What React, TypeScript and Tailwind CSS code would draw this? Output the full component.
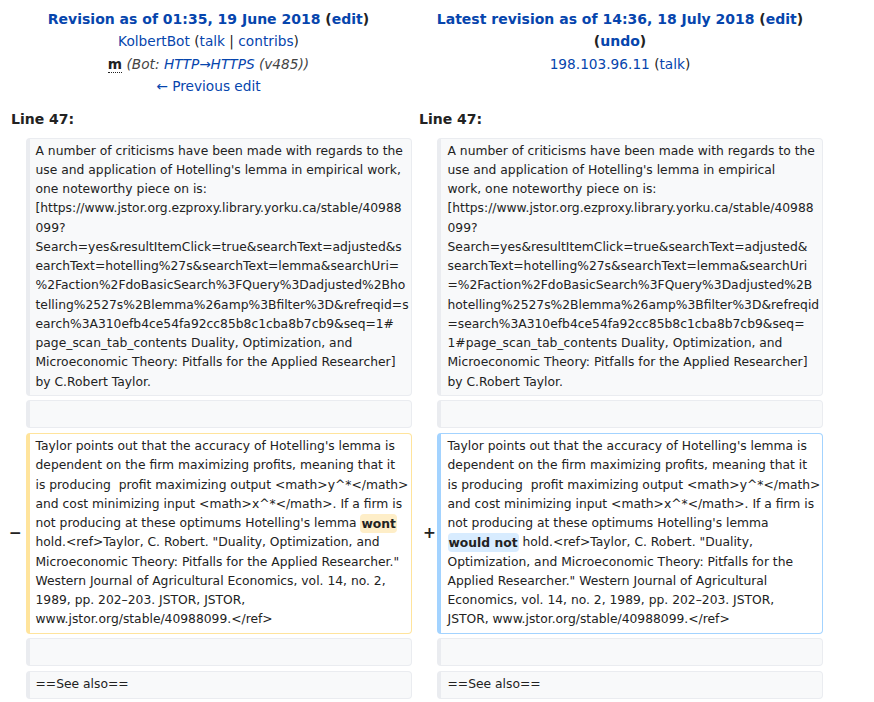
const leftTop = [
  "A number of criticisms have been made with regards to the",
  "use and application of Hotelling's lemma in empirical work,",
  "one noteworthy piece on is:",
  "[https://www.jstor.org.ezproxy.library.yorku.ca/stable/40988",
  "099?",
  "Search=yes&resultItemClick=true&searchText=adjusted&s",
  "earchText=hotelling%27s&searchText=lemma&searchUri=",
  "%2Faction%2FdoBasicSearch%3FQuery%3Dadjusted%2Bho",
  "telling%2527s%2Blemma%26amp%3Bfilter%3D&refreqid=s",
  "earch%3A310efb4ce54fa92cc85b8c1cba8b7cb9&seq=1#",
  "page_scan_tab_contents Duality, Optimization, and",
  "Microeconomic Theory: Pitfalls for the Applied Researcher]",
  "by C.Robert Taylor.",
];

const rightTop = [
  "A number of criticisms have been made with regards to the",
  "use and application of Hotelling's lemma in empirical",
  "work, one noteworthy piece on is:",
  "[https://www.jstor.org.ezproxy.library.yorku.ca/stable/40988",
  "099?",
  "Search=yes&resultItemClick=true&searchText=adjusted&",
  "searchText=hotelling%27s&searchText=lemma&searchUri",
  "=%2Faction%2FdoBasicSearch%3FQuery%3Dadjusted%2B",
  "hotelling%2527s%2Blemma%26amp%3Bfilter%3D&refreqid",
  "=search%3A310efb4ce54fa92cc85b8c1cba8b7cb9&seq=",
  "1#page_scan_tab_contents Duality, Optimization, and",
  "Microeconomic Theory: Pitfalls for the Applied Researcher]",
  "by C.Robert Taylor.",
];

const Box = ({
  kind,
  children,
}: {
  kind: "ctx" | "del" | "add";
  children?: React.ReactNode;
}) => {
  const tone =
    kind === "ctx"
      ? "bg-[#f8f9fa] border-[#eaecf0]"
      : kind === "del"
        ? "bg-white border-[#ffe49c]"
        : "bg-white border-[#a3d3ff]";
  return (
    <div
      className={`${tone} border border-l-4 rounded-[4px] pl-[5.5px] pr-[6px] py-[3px] min-h-[28px] text-[12.32px] leading-[19.25px] whitespace-pre`}
    >
      {children}
    </div>
  );
};

const Lines = ({ lines }: { lines: string[] }) => (
  <>
    {lines.map((l, i) => (
      <div key={i}>{l}</div>
    ))}
  </>
);

const Del = ({ children }: { children: React.ReactNode }) => (
  <span className="font-bold bg-[#feeec8] rounded-[4px] px-[1px] py-[2.5px]">
    {children}
  </span>
);

const Ins = ({ children }: { children: React.ReactNode }) => (
  <span className="font-bold bg-[#d8ecff] rounded-[4px] px-[1px] py-[2.5px]">
    {children}
  </span>
);

const A = ({ children }: { children: React.ReactNode }) => (
  <a className="text-[#0645ad]">{children}</a>
);

export default function App() {
  return (
    <div className="w-[874px] min-h-[702px] bg-white text-[#222] font-['DejaVu_Sans',sans-serif] pt-[8px]">
      {/* revision headers */}
      <div className="ml-[5px] grid grid-cols-[407px_416px] text-[14px] leading-[22.4px] text-center">
        <div>
          <div className="font-bold">
            <A>Revision as of 01:35, 19 June 2018</A> (<A>edit</A>)
          </div>
          <div className="text-[13.7px]">
            <A>KolbertBot</A> (<A>talk</A> | <A>contribs</A>)
          </div>
          <div className="text-[13.7px]">
            <abbr className="font-bold no-underline border-b border-dotted border-[#222]">m</abbr>{" "}
            <span className="italic text-[#444]">
              (Bot: <A>HTTP→HTTPS</A> (v485))
            </span>
          </div>
          <div className="text-[13.7px]">
            <A>← Previous edit</A>
          </div>
        </div>
        <div>
          <div className="font-bold">
            <A>Latest revision as of 14:36, 18 July 2018</A> (<A>edit</A>)
          </div>
          <div className="font-bold">
            (<A>undo</A>)
          </div>
          <div className="text-[13.7px]">
            <A>198.103.96.11</A> (<A>talk</A>)
          </div>
        </div>
      </div>

      {/* diff body */}
      <div className="ml-[5px] mt-[10px] grid grid-cols-[21px_386px_25px_386px] gap-y-[4.6px]">
        <div className="col-span-2 pl-[6px] text-[14px] leading-[22.4px] font-bold mb-[3px]">
          Line 47:
        </div>
        <div className="col-span-2 pl-[7px] text-[14px] leading-[22.4px] font-bold mb-[3px]">
          Line 47:
        </div>

        <div />
        <Box kind="ctx">
          <Lines lines={leftTop} />
        </Box>
        <div />
        <Box kind="ctx">
          <div className="pl-[1px]">
            <Lines lines={rightTop} />
          </div>
        </Box>

        <div />
        <Box kind="ctx" />
        <div />
        <Box kind="ctx" />

        <div className="flex items-center justify-end pr-[4px] text-[15.4px] font-bold">
          −
        </div>
        <Box kind="del">
          <div>Taylor points out that the accuracy of Hotelling's lemma is</div>
          <div>dependent on the firm maximizing profits, meaning that it</div>
          <div>is producing  profit maximizing output &lt;math&gt;y^*&lt;/math&gt;</div>
          <div>and cost minimizing input &lt;math&gt;x^*&lt;/math&gt;. If a firm is</div>
          <div>
            not producing at these optimums Hotelling's lemma <Del>wont</Del>
          </div>
          <div>hold.&lt;ref&gt;Taylor, C. Robert. "Duality, Optimization, and</div>
          <div>Microeconomic Theory: Pitfalls for the Applied Researcher."</div>
          <div>Western Journal of Agricultural Economics, vol. 14, no. 2,</div>
          <div>1989, pp. 202–203. JSTOR, JSTOR,</div>
          <div>www.jstor.org/stable/40988099.&lt;/ref&gt;</div>
        </Box>
        <div className="flex items-center justify-end pr-[1px] text-[15.4px] font-bold">
          +
        </div>
        <Box kind="add">
          <div className="pl-[1px]">
            <div>Taylor points out that the accuracy of Hotelling's lemma is</div>
            <div>dependent on the firm maximizing profits, meaning that it</div>
            <div>is producing  profit maximizing output &lt;math&gt;y^*&lt;/math&gt;</div>
            <div>and cost minimizing input &lt;math&gt;x^*&lt;/math&gt;. If a firm is</div>
            <div>not producing at these optimums Hotelling's lemma</div>
            <div>
              <Ins>would not</Ins> hold.&lt;ref&gt;Taylor, C. Robert. "Duality,
            </div>
            <div>Optimization, and Microeconomic Theory: Pitfalls for the</div>
            <div>Applied Researcher." Western Journal of Agricultural</div>
            <div>Economics, vol. 14, no. 2, 1989, pp. 202–203. JSTOR,</div>
            <div>JSTOR, www.jstor.org/stable/40988099.&lt;/ref&gt;</div>
          </div>
        </Box>

        <div />
        <Box kind="ctx" />
        <div />
        <Box kind="ctx" />

        <div />
        <Box kind="ctx">==See also==</Box>
        <div />
        <Box kind="ctx">
          <div className="pl-[1px]">==See also==</div>
        </Box>
      </div>
    </div>
  );
}
